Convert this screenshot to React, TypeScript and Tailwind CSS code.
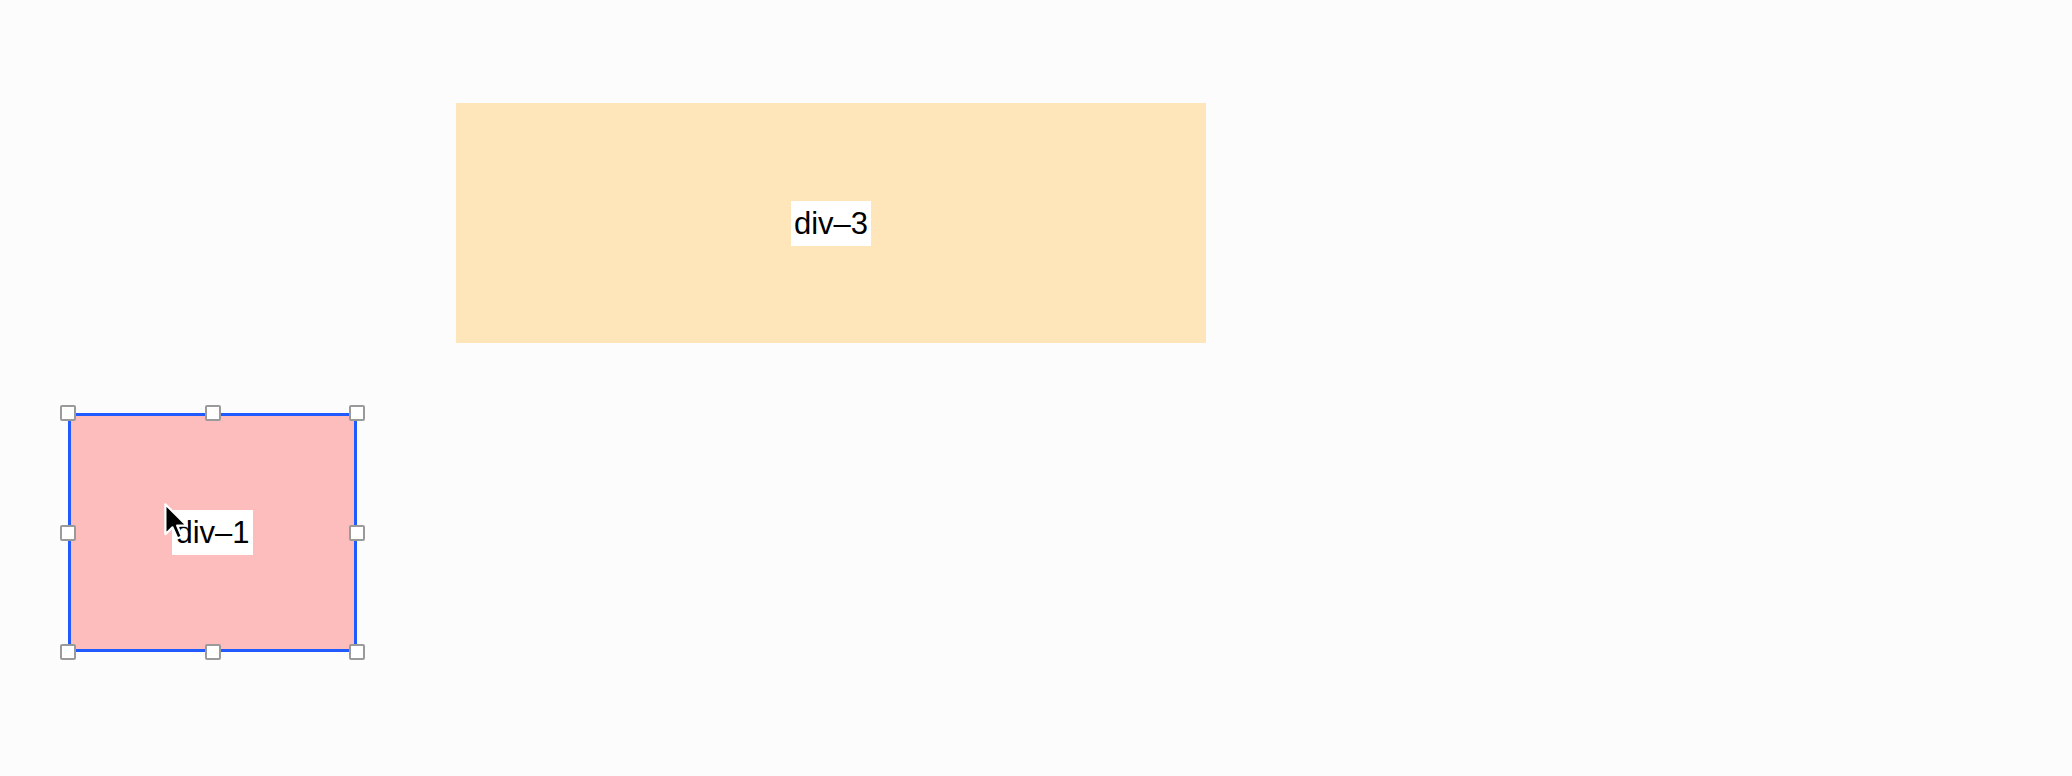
import React from 'react';

type Box = {
  id: string;
  label: string;
  className: string;
  selected?: boolean;
};

const boxes: Box[] = [
  {
    id: 'div-3',
    label: 'div–3',
    className: 'left-[456px] top-[103px] w-[750px] h-[240px] bg-[#fee5ba]',
  },
  {
    id: 'div-1',
    label: 'div–1',
    className: 'left-[68px] top-[413px] w-[289px] h-[239px] bg-[#fdbdbd] border-[3px] border-[#1f5bff]',
    selected: true,
  },
];

// resize handles: corners and edge midpoints
const handles = [
  'left-0 top-0',
  'left-1/2 top-0',
  'left-full top-0',
  'left-0 top-1/2',
  'left-full top-1/2',
  'left-0 top-full',
  'left-1/2 top-full',
  'left-full top-full',
];

const Cursor = () => (
  <svg
    className="absolute left-[163px] top-[502px]"
    width="27"
    height="40"
    viewBox="0 0 12 18"
  >
    <path
      d="M1 1 L1 14.5 L4.2 11.4 L6.4 16.4 L8.4 15.5 L6.3 10.6 L10.6 10.6 Z"
      fill="#000"
      stroke="#fff"
      strokeWidth="1"
      strokeLinejoin="round"
    />
  </svg>
);

const App = () => {
  return (
    <div
      className="relative w-[2072px] h-[776px] bg-[#fcfcfd] overflow-hidden"
      style={{ fontFamily: '"Liberation Sans", Arial, sans-serif' }}
    >
      {boxes.map((b) => (
        <div key={b.id} className={`absolute box-border flex items-center justify-center ${b.className}`}>
          <span className="bg-white px-[3px] text-[31px] leading-[45px] text-black">{b.label}</span>
          {b.selected && (
            <div className="absolute -inset-[3px] pointer-events-none">
              {handles.map((h) => (
                <span
                  key={h}
                  className={`absolute ${h} w-[16px] h-[16px] -translate-x-1/2 -translate-y-1/2 bg-white border-2 border-[#9a9a9a] rounded-[2px]`}
                />
              ))}
            </div>
          )}
        </div>
      ))}
      <Cursor />
    </div>
  );
};

export default App;
